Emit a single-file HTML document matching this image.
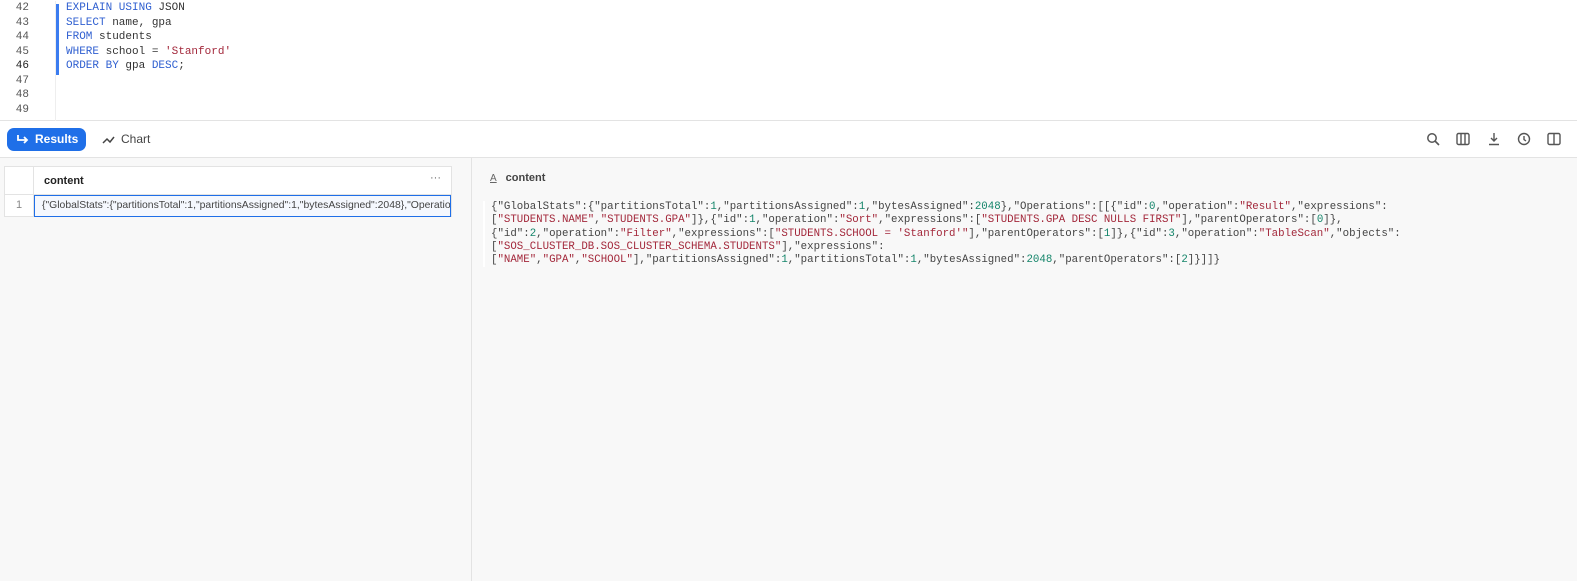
<!DOCTYPE html>
<html><head><meta charset="utf-8"><style>
*{margin:0;padding:0;box-sizing:border-box}
body{width:1577px;height:581px;overflow:hidden;background:#f8f8f8;font-family:"Liberation Sans",sans-serif;position:relative}
.ed{position:absolute;left:0;top:0;width:1577px;height:121px;background:#fff;border-bottom:1px solid #e3e3e3}
.ln{position:absolute;left:0;top:1px;width:56px;font:11px/14.5px "Liberation Mono",monospace;color:#555;text-align:right;padding-right:26px;border-right:1px solid #eee;height:120px}
.gut{position:absolute;left:56px;top:4px;width:3px;height:71px;background:#3b7cf0}
.code{position:absolute;left:66px;top:1px;font:11px/14.5px "Liberation Mono",monospace;color:#333;white-space:pre}
.k{color:#2f5fd0}.s{color:#a3283b}.n{color:#14856a}
.tb{position:absolute;left:0;top:121px;width:1577px;height:37px;background:#fff;border-bottom:1px solid #e3e3e3}
.btn{position:absolute;left:7px;top:7px;width:79px;height:23px;background:#1f6fe8;border-radius:7px;color:#fff;font-weight:bold;font-size:12px;line-height:23px;padding-left:28px}
.chart{position:absolute;left:102px;top:7px;font-size:12px;line-height:23px;color:#444;padding-left:19px}
.ic{position:absolute;top:11px}
.tbl{position:absolute;left:4px;top:166px;width:448px;height:51px;background:#fff;border:1px solid #e3e3e3}
.rn{position:absolute;left:0;top:0;width:29px;height:49px;border-right:1px solid #e3e3e3}
.hd{position:absolute;left:39px;top:8px;font-size:11px;font-weight:bold;color:#222}
.row{position:absolute;left:0;top:27px;width:446px;border-top:1px solid #e3e3e3}
.cell{position:absolute;left:29px;top:0;width:417px;height:22px;border:1.5px solid #1f6fe8;background:#f5f8fe;font-size:10.4px;line-height:19px;color:#444;padding-left:7px;white-space:nowrap;overflow:hidden}
.vd{position:absolute;left:471px;top:158px;width:1px;height:423px;background:#e3e3e3}
.rh{position:absolute;left:490px;top:172px;font-size:11px;font-weight:bold;color:#444}
.json{position:absolute;left:483px;top:201px;border-left:2px solid #fff;padding-left:6px;font:10.75px/13.3px "Liberation Mono",monospace;color:#444;white-space:pre}
</style></head><body>
<div class="ed">
<div class="ln">42<br>43<br>44<br>45<br><span style="color:#222">46</span><br>47<br>48<br>49</div>
<div class="gut"></div>
<div class="code"><span class="k">EXPLAIN USING</span> JSON
<span class="k">SELECT</span> name, gpa
<span class="k">FROM</span> students
<span class="k">WHERE</span> school = <span class="s">'Stanford'</span>
<span class="k">ORDER BY</span> gpa <span class="k">DESC</span>;</div>
</div>
<div class="tb">
<div class="btn"><svg style="position:absolute;left:9px;top:6px" width="13" height="12" viewBox="0 0 13 12"><path d="M2 1v5h9M8 3l3 3-3 3" fill="none" stroke="#fff" stroke-width="1.8"/></svg>Results</div>
<div class="chart"><svg style="position:absolute;left:0;top:7px" width="13" height="10" viewBox="0 0 13 10"><path d="M1 8l4-4 3 3 4-5" fill="none" stroke="#444" stroke-width="1.5"/></svg>Chart</div>
<svg class="ic" style="left:1426px" width="14" height="14" viewBox="0 0 14 14"><circle cx="6" cy="6" r="4.2" fill="none" stroke="#555" stroke-width="1.5"/><path d="M9 9l4 4" stroke="#555" stroke-width="1.6"/></svg>
<svg class="ic" style="left:1456px" width="14" height="14" viewBox="0 0 14 14"><rect x="1" y="1.5" width="12" height="11" rx="1.5" fill="none" stroke="#555" stroke-width="1.4"/><path d="M5 1.5v11M9 1.5v11" stroke="#555" stroke-width="1.4"/></svg>
<svg class="ic" style="left:1487px" width="14" height="14" viewBox="0 0 14 14"><path d="M7 1v8M4 6l3 3 3-3M2 12.5h10" fill="none" stroke="#555" stroke-width="1.4"/></svg>
<svg class="ic" style="left:1517px" width="14" height="14" viewBox="0 0 14 14"><circle cx="7" cy="7" r="5.5" fill="none" stroke="#555" stroke-width="1.4"/><path d="M7 4v3.5l2 1.5" fill="none" stroke="#555" stroke-width="1.4"/></svg>
<svg class="ic" style="left:1547px" width="14" height="14" viewBox="0 0 14 14"><rect x="1" y="1.5" width="12" height="11" rx="1.5" fill="none" stroke="#555" stroke-width="1.4"/><path d="M7 1.5v11" stroke="#555" stroke-width="1.4"/></svg>
</div>
<div class="tbl">
<div class="rn"></div>
<div class="hd">content</div>
<div style="position:absolute;right:10px;top:5px;color:#666;font-size:11px">···</div>
<div class="row"><div style="position:absolute;left:11px;top:4px;font-size:11px;color:#888">1</div>
<div class="cell">{"GlobalStats":{"partitionsTotal":1,"partitionsAssigned":1,"bytesAssigned":2048},"Operations":[[</div></div>
</div>
<div class="vd"></div>
<div class="rh"><span style="font-weight:normal;font-size:10px;text-decoration:underline;margin-right:9px;color:#666">A</span>content</div>
<div class="json">{"GlobalStats":{"partitionsTotal":<span class="n">1</span>,"partitionsAssigned":<span class="n">1</span>,"bytesAssigned":<span class="n">2048</span>},"Operations":[[{"id":<span class="n">0</span>,"operation":<span class="s">"Result"</span>,"expressions":
[<span class="s">"STUDENTS.NAME"</span>,<span class="s">"STUDENTS.GPA"</span>]},{"id":<span class="n">1</span>,"operation":<span class="s">"Sort"</span>,"expressions":[<span class="s">"STUDENTS.GPA DESC NULLS FIRST"</span>],"parentOperators":[<span class="n">0</span>]},
{"id":<span class="n">2</span>,"operation":<span class="s">"Filter"</span>,"expressions":[<span class="s">"STUDENTS.SCHOOL = 'Stanford'"</span>],"parentOperators":[<span class="n">1</span>]},{"id":<span class="n">3</span>,"operation":<span class="s">"TableScan"</span>,"objects":
[<span class="s">"SOS_CLUSTER_DB.SOS_CLUSTER_SCHEMA.STUDENTS"</span>],"expressions":
[<span class="s">"NAME"</span>,<span class="s">"GPA"</span>,<span class="s">"SCHOOL"</span>],"partitionsAssigned":<span class="n">1</span>,"partitionsTotal":<span class="n">1</span>,"bytesAssigned":<span class="n">2048</span>,"parentOperators":[<span class="n">2</span>]}]]}</div>
</body></html>
